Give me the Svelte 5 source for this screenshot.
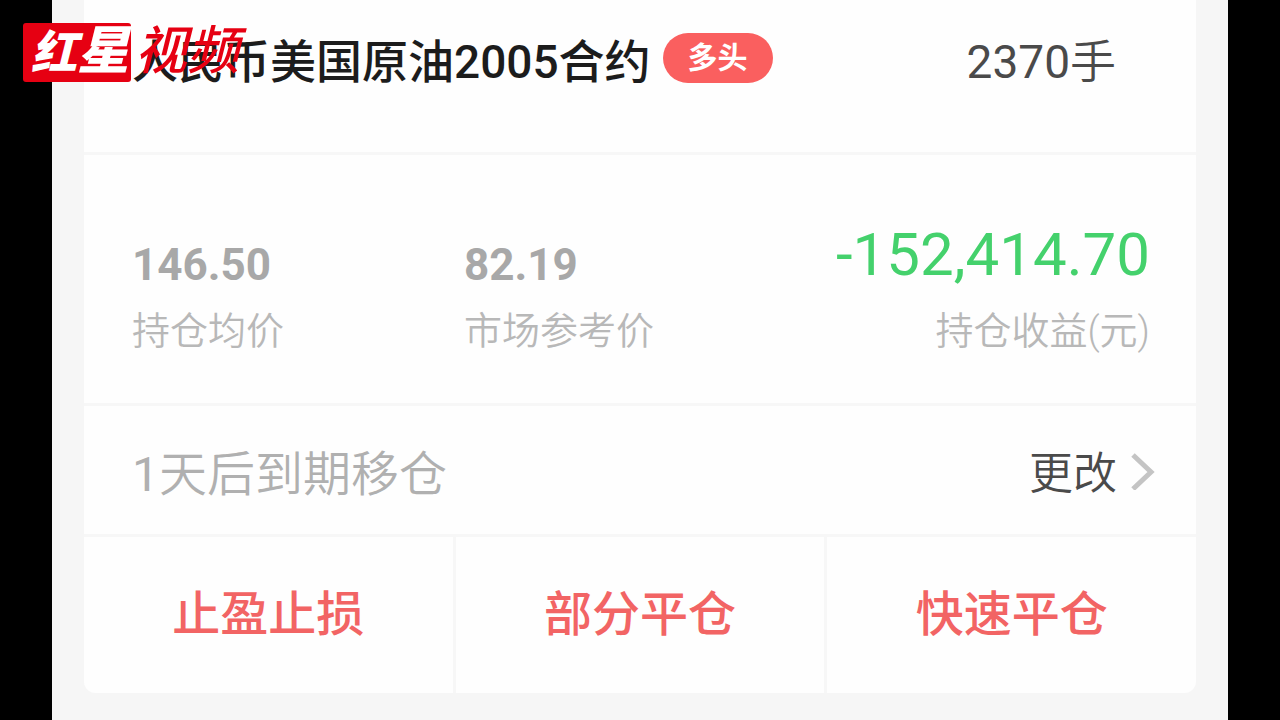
<script>
  let contract = { name: '人民币美国原油2005合约', side: '多头', lots: 2370 };

  let stats = [
    { value: '146.50', label: '持仓均价' },
    { value: '82.19', label: '市场参考价' },
    { value: '-152,414.70', label: '持仓收益(元)', profit: true }
  ];

  let daysLeft = 1;
  let actions = ['止盈止损', '部分平仓', '快速平仓'];
</script>

<div class="stage">
  <main class="screen">
    <section class="card">
      <header class="head">
        <h1 class="name">{contract.name}</h1>
        <span class="tag">{contract.side}</span>
        <span class="lots"><span class="num">{contract.lots}</span>手</span>
      </header>

      <dl class="stats">
        {#each stats as stat}
          <div class="stat" class:profit={stat.profit}>
            <dd>{stat.value}</dd>
            <dt>{stat.label}</dt>
          </div>
        {/each}
      </dl>

      <div class="expiry">
        <span><span class="num">{daysLeft}</span>天后到期移仓</span>
        <button class="change">
          更改
          <svg width="26" height="40" viewBox="0 0 26 40" aria-hidden="true">
            <path d="M3 5L21 22L3 39" fill="none" stroke="#c4c4c4" stroke-width="5" />
          </svg>
        </button>
      </div>

      <div class="actions">
        {#each actions as action}
          <button class="action">{action}</button>
        {/each}
      </div>
    </section>
  </main>

  <div class="logo">
    <b><span class="small">红</span>星</b>
    <span class="word">视频</span>
  </div>
</div>

<style>
:global(body) {
  background: #000;
}
.stage {
  position: relative;
  min-height: 100vh;
  padding: 0 52px;
  box-sizing: border-box;
  background: #000;
  font-family: Roboto, "Noto Sans CJK SC", sans-serif;
}
.screen {
  min-height: 100vh;
  padding: 0 32px 26px;
  box-sizing: border-box;
  background: #f6f6f6;
}
.card {
  background: #fefefe;
  border-radius: 0 0 12px 12px;
  overflow: hidden;
}
.head {
  display: flex;
  align-items: center;
  padding: 32px 80px 60px 48px;
  border-bottom: 3px solid #f7f7f7;
}
.name {
  margin: 0;
  font-size: 46px;
  line-height: 60px;
  font-weight: 500;
  color: #1c1c1c;
  white-space: nowrap;
}
.tag {
  margin: 0 0 8px 12px;
  padding: 0 25px;
  border-radius: 26px;
  background: #fa5f5f;
  color: #fff;
  font-size: 30px;
  line-height: 50px;
  font-weight: 700;
}
.lots {
  margin-left: auto;
  font-size: 46px;
  line-height: 60px;
  font-weight: 350;
  color: #4a4a4a;
}
.num {
  font-weight: 400;
}
.stats {
  display: grid;
  grid-template-columns: 332px 1fr auto;
  align-items: end;
  margin: 0;
  padding: 60px 46px 42px 48px;
  border-bottom: 3px solid #f7f7f7;
}
.stat {
  display: flex;
  flex-direction: column;
  gap: 6px;
}
.stat dd {
  margin: 0;
  font-size: 44px;
  line-height: 60px;
  font-weight: 700;
  color: #a8a8a8;
}
.stat dt {
  font-size: 38px;
  line-height: 60px;
  font-weight: 350;
  color: #b8b8b8;
}
.profit {
  text-align: right;
}
.profit dd {
  font-size: 60px;
  line-height: 80px;
  font-weight: 400;
  color: #44d16c;
}
.expiry {
  display: flex;
  align-items: center;
  justify-content: space-between;
  height: 128px;
  padding: 0 40px 0 48px;
  border-bottom: 3px solid #f7f7f7;
  font-size: 48px;
  font-weight: 350;
  color: #b0b0b0;
}
button {
  margin: 0;
  padding: 0;
  border: 0;
  background: none;
  font-family: inherit;
  cursor: pointer;
}
.change {
  display: flex;
  align-items: center;
  gap: 13px;
  font-size: 44px;
  font-weight: 350;
  color: #4a4a4a;
}
.actions {
  display: grid;
  grid-template-columns: 1fr 1fr 1fr;
  gap: 3px;
  background: #f7f7f7;
}
.action {
  padding: 48px 0;
  background: #fefefe;
  font-size: 48px;
  line-height: 60px;
  font-weight: 500;
  color: #f26464;
}
/* channel watermark over the top left corner */
.logo {
  position: absolute;
  top: 23px;
  left: 23px;
  display: flex;
  font-size: 52px;
  line-height: 57px;
  font-weight: 700;
  font-style: italic;
  color: #e60012;
}
.logo b {
  padding: 0 2px 0 8px;
  border-radius: 3px;
  background: #e60012;
  color: #fff;
}
.small {
  font-size: 46px;
}
.word {
  padding-left: 4px;
  font-weight: 500;
}
</style>
